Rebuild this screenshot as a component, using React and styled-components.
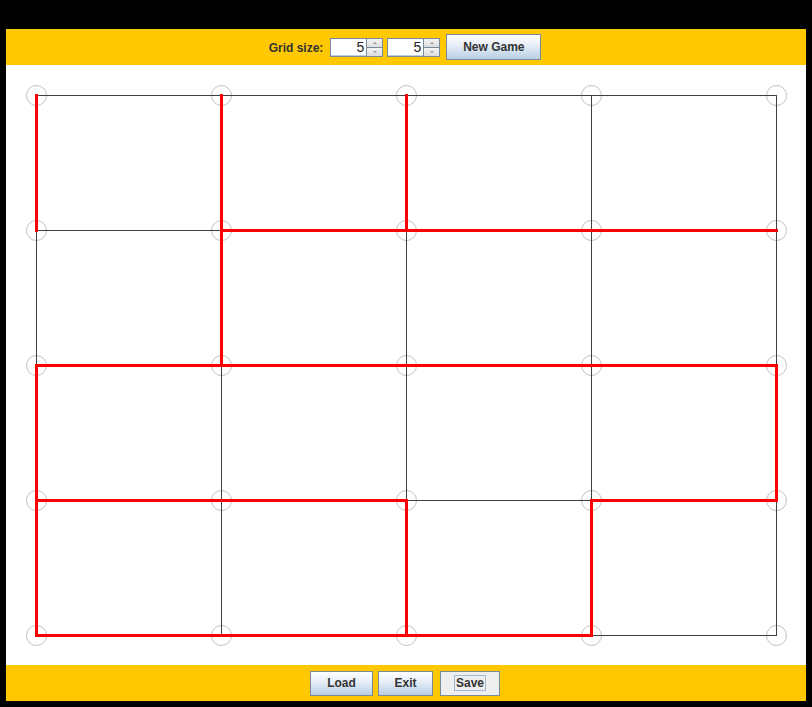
import { createGlobalStyle } from "styled-components";
import styled from "styled-components";

const GlobalStyle = createGlobalStyle`
  html, body {
    margin: 0;
    padding: 0;
    background: #000;
  }
  #root {
    font-family: "Liberation Sans", Arial, sans-serif;
  }
`;

const COLS = 5;
const ROWS = 5;
const DX = 185;
const DY = 135;
const OX = 30.5;
const OY = 30.5;

// red segments: [col, row, col2, row2]
const moves = [
  [0, 0, 0, 1],
  [1, 0, 1, 1],
  [2, 0, 2, 1],
  [1, 1, 2, 1],
  [2, 1, 3, 1],
  [3, 1, 4, 1],
  [1, 1, 1, 2],
  [0, 2, 1, 2],
  [1, 2, 2, 2],
  [2, 2, 3, 2],
  [3, 2, 4, 2],
  [0, 2, 0, 3],
  [4, 2, 4, 3],
  [0, 3, 1, 3],
  [1, 3, 2, 3],
  [3, 3, 4, 3],
  [0, 3, 0, 4],
  [2, 3, 2, 4],
  [3, 3, 3, 4],
  [0, 4, 1, 4],
  [1, 4, 2, 4],
  [2, 4, 3, 4],
];

const Frame = styled.div`
  padding: 29px 6px 6px 6px;
  width: 800px;
`;

const Toolbar = styled.div`
  height: 36px;
  background: #ffc800;
  display: flex;
  align-items: center;
  justify-content: center;
  padding-right: ${({ $shift }) => $shift || 0}px;
  box-sizing: border-box;
`;

const Label = styled.span`
  font-size: 12px;
  font-weight: bold;
  color: #333;
  margin-right: 7px;
  margin-top: 2px;
`;

const Spinner = styled.div`
  display: flex;
  width: 53px;
  height: 19px;
  box-sizing: border-box;
  border: 1px solid #7a8a99;
  background: #fff;
  margin-right: 4px;
`;

const SpinField = styled.div`
  flex: 1;
  text-align: right;
  padding-right: 2px;
  font-size: 14px;
  line-height: 17px;
  color: #222;
  border-bottom: 1px solid #b8cfe5;
`;

const SpinArrows = styled.div`
  width: 15px;
  display: flex;
  flex-direction: column;
  border-left: 1px solid #7a8a99;
`;

const ArrowBtn = styled.div`
  flex: 1;
  display: flex;
  align-items: center;
  justify-content: center;
  background: linear-gradient(#f4f4f4, #dcdcdc);
  & + & {
    border-top: 1px solid #7a8a99;
  }
  &::after {
    content: "";
    border-left: 2px solid transparent;
    border-right: 2px solid transparent;
    ${({ $down }) =>
      $down ? "border-top: 2px solid #999;" : "border-bottom: 2px solid #999;"}
  }
`;

const Button = styled.button`
  height: ${({ $h }) => $h || 25}px;
  width: ${({ $w }) => $w}px;
  margin-left: ${({ $ml }) => $ml || 0}px;
  box-sizing: border-box;
  border: 1px solid #7a8a99;
  background: ${({ $focused }) =>
    $focused ? "#eeeeee" : "linear-gradient(#ffffff 0%, #e8eff7 40%, #b8cfe5 100%)"};
  font-family: "Liberation Sans", Arial, sans-serif;
  font-size: 12px;
  font-weight: bold;
  color: #333;
  padding: 0;
  display: flex;
  align-items: center;
  justify-content: center;
  cursor: pointer;
`;

const FocusBox = styled.span`
  border: 1px solid #a3b8cc;
  padding: 0 1px;
  line-height: 14px;
`;

const Board = styled.div`
  height: 600px;
  background: #fff;
  svg {
    display: block;
  }
`;

const GameBoard = () => {
  const px = (c) => OX + c * DX;
  const py = (r) => OY + r * DY;
  const lines = [];
  for (let r = 0; r < ROWS; r++) {
    lines.push(
      <line key={"h" + r} x1={px(0)} y1={py(r)} x2={px(COLS - 1)} y2={py(r)} />
    );
  }
  for (let c = 0; c < COLS; c++) {
    lines.push(
      <line key={"v" + c} x1={px(c)} y1={py(0)} x2={px(c)} y2={py(ROWS - 1)} />
    );
  }
  const dots = [];
  for (let r = 0; r < ROWS; r++) {
    for (let c = 0; c < COLS; c++) {
      dots.push(<circle key={r + "-" + c} cx={px(c)} cy={py(r)} r={10} />);
    }
  }
  return (
    <svg width="800" height="600">
      <g stroke="#c0c0c0" strokeWidth="1" fill="none">
        {dots}
      </g>
      <g stroke="#404040" strokeWidth="1" shapeRendering="crispEdges">
        {lines}
      </g>
      <g stroke="#ff0000" strokeWidth="3" strokeLinecap="square">
        {moves.map(([c1, r1, c2, r2], i) => (
          <line key={i} x1={px(c1)} y1={py(r1)} x2={px(c2)} y2={py(r2)} />
        ))}
      </g>
    </svg>
  );
};

const NumberSpinner = ({ value }) => (
  <Spinner>
    <SpinField>{value}</SpinField>
    <SpinArrows>
      <ArrowBtn />
      <ArrowBtn $down />
    </SpinArrows>
  </Spinner>
);

export default function App() {
  return (
    <>
      <GlobalStyle />
      <Frame>
        <Toolbar $shift={2}>
          <Label>Grid size:</Label>
          <NumberSpinner value={5} />
          <NumberSpinner value={5} />
          <Button $w={95} $h={26} $ml={2}>
            New Game
          </Button>
        </Toolbar>
        <Board>
          <GameBoard />
        </Board>
        <Toolbar $shift={2}>
          <Button $w={63}>Load</Button>
          <Button $w={55} $ml={5}>
            Exit
          </Button>
          <Button $w={60} $ml={7} $focused>
            <FocusBox>Save</FocusBox>
          </Button>
        </Toolbar>
      </Frame>
    </>
  );
}
